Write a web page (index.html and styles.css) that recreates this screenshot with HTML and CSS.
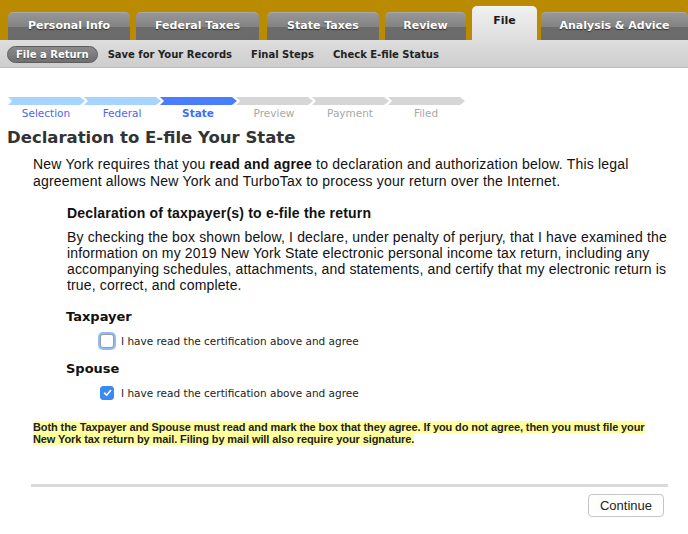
FILE: index.html
```html
<!DOCTYPE html>
<html lang="en">
<head>
    <meta charset="UTF-8">
    <title>Declaration to E-file Your State</title>
    <link rel="stylesheet" href="styles.css">
</head>
<body>
    <div class="topbar">
        <div class="tab tab-personal">Personal Info</div>
        <div class="tab tab-federal">Federal Taxes</div>
        <div class="tab tab-state">State Taxes</div>
        <div class="tab tab-review">Review</div>
        <div class="tab tab-file active">File</div>
        <div class="tab tab-analysis">Analysis &amp; Advice</div>
    </div>
    <div class="subnav">
        <span class="subnav-item current">File a Return</span>
        <span class="subnav-item">Save for Your Records</span>
        <span class="subnav-item">Final Steps</span>
        <span class="subnav-item">Check E-file Status</span>
    </div>

    <div class="steps">
        <div class="step done"><div class="arrow"></div><span>Selection</span></div>
        <div class="step done"><div class="arrow"></div><span>Federal</span></div>
        <div class="step current"><div class="arrow"></div><span>State</span></div>
        <div class="step"><div class="arrow"></div><span>Preview</span></div>
        <div class="step"><div class="arrow"></div><span>Payment</span></div>
        <div class="step"><div class="arrow"></div><span>Filed</span></div>
    </div>

    <div class="content">
        <h1>Declaration to E-file Your State</h1>
        <p class="intro">New York requires that you <b>read and agree</b> to declaration and authorization below. This legal agreement allows New York and TurboTax to process your return over the Internet.</p>

        <div class="declaration">
            <h2>Declaration of taxpayer(s) to e-file the return</h2>
            <p>By checking the box shown below, I declare, under penalty of perjury, that I have examined the information on my 2019 New York State electronic personal income tax return, including any accompanying schedules, attachments, and statements, and certify that my electronic return is true, correct, and complete.</p>
        </div>

        <div class="signer">
            <h3>Taxpayer</h3>
            <label class="agree">
                <span class="box focus"></span>
                I have read the certification above and agree
            </label>
        </div>
        <div class="signer">
            <h3>Spouse</h3>
            <label class="agree">
                <span class="box checked">
                    <svg width="9" height="8" viewBox="0 0 9 8"><path d="M1.5 4.2 L3.6 6.2 L7.6 1.6" fill="none" stroke="#fff" stroke-width="1.6" stroke-linecap="round" stroke-linejoin="round"/></svg>
                </span>
                I have read the certification above and agree
            </label>
        </div>

        <p class="note"><span>Both the Taxpayer and Spouse must read and mark the box that they agree. If you do not agree, then you must file your New York tax return by mail. Filing by mail will also require your signature.</span></p>

        <div class="footer">
            <button class="continue">Continue</button>
        </div>
    </div>
</body>
</html>
```

FILE: styles.css
```css
body {
    margin: 0;
    font-family: "Liberation Sans", Arial, sans-serif;
    color: #111;
    background: #fff;
}
.topbar {
    background-color: #ba8b00;
    height: 40px;
    display: flex;
    align-items: flex-end;
    padding-left: 8px;
}
.tab {
    height: 28px;
    margin-right: 6px;
    border-radius: 5px 5px 0 0;
    background: linear-gradient(#979797 0%, #838383 50%, #6c6c6c 51%, #6a6a6a 100%);
    border-top: 1px solid #a8a8a8;
    box-sizing: border-box;
    color: #fff;
    font-family: "DejaVu Sans", sans-serif;
    font-weight: bold;
    font-size: 11px;
    text-shadow: 0 1px 1px rgba(0,0,0,0.6);
    display: flex;
    justify-content: center;
    padding-top: 6px;
}
.tab-personal { width: 122px; }
.tab-federal { width: 123px; margin-right: 8px; }
.tab-state { width: 112px; }
.tab-review { width: 81px; }
.tab-file { width: 65px; margin-right: 4px; }
.tab-analysis { flex: 1; margin-right: 0; }
.tab.active {
    height: 34px;
    background: linear-gradient(#f0f0f0, #dedede);
    border-top: 1px solid #fafafa;
    color: #1a1a1a;
    text-shadow: none;
    padding-top: 7px;
}
.subnav {
    height: 28px;
    background: linear-gradient(#dedede, #cdcdcd);
    border-bottom: 1px solid #bdbdbd;
    box-sizing: border-box;
    display: flex;
    align-items: center;
    padding: 2px 0 0 7px;
    font-family: "DejaVu Sans", sans-serif;
    font-weight: bold;
    font-size: 10px;
    color: #222;
}
.subnav-item {
    margin-right: 19px;
}
.subnav-item.current {
    background: linear-gradient(#8a8a8a, #707070);
    border: 1px solid #5e5e5e;
    border-radius: 10px;
    color: #fff;
    padding: 2px 8px 2px 8px;
    margin-right: 10px;
    text-shadow: 0 1px 1px rgba(0,0,0,0.5);
}
.steps {
    display: flex;
    padding: 29px 0 0 8px;
}
.step {
    width: 76px;
    font-family: "DejaVu Sans", sans-serif;
    font-size: 10.5px;
    color: #a8a8a8;
    text-align: center;
}
.step .arrow {
    height: 8px;
    background: #d6d6d6;
    clip-path: polygon(0 0, calc(100% - 5px) 0, 100% 50%, calc(100% - 5px) 100%, 0 100%, 4px 50%);
    margin-right: -1px;
}
.step span {
    display: block;
    margin-top: 2px;
}
.step.done .arrow { background: #a7d3ff; }
.step.done { color: #4f63f0; }
.step.current .arrow { background: #4a7dfd; }
.step.current { color: #3c6cff; font-weight: bold; }
.content {
    padding: 0 7px;
}
h1 {
    font-family: "DejaVu Sans", sans-serif;
    font-size: 16.5px;
    color: #333;
    margin: 9px 0 9px 0;
}
.intro {
    margin: 0 0 0 26px;
    font-size: 14px;
    line-height: 17px;
    letter-spacing: 0.2px;
    width: 620px;
}
.declaration {
    margin: 15px 0 0 60px;
    width: 610px;
}
h2 {
    font-size: 14px;
    letter-spacing: 0.2px;
    margin: 0 0 8px 0;
}
.declaration p {
    margin: 0;
    font-size: 14px;
    line-height: 16px;
    letter-spacing: 0.15px;
}
.signer {
    margin-left: 59px;
}
.signer h3 {
    font-family: "DejaVu Sans", sans-serif;
    font-size: 13px;
    margin: 16px 0 10px 0;
}
.signer + .signer h3 {
    margin-top: 13px;
}
.agree {
    display: flex;
    align-items: center;
    margin-left: 34px;
    font-family: "DejaVu Sans", sans-serif;
    font-size: 10.5px;
    color: #222;
}
.box {
    width: 12px;
    height: 12px;
    border: 1px solid #9a9a9a;
    border-radius: 3px;
    margin-right: 7px;
    background: #fff;
    display: flex;
    align-items: center;
    justify-content: center;
}
.box.focus {
    box-shadow: 0 0 0 2px #8fbdf5;
}
.box.checked {
    background: #3b8af4;
    border-color: #3b8af4;
}
.note {
    margin: 21px 0 0 26px;
    width: 626px;
    font-size: 11px;
    font-weight: bold;
    line-height: 12px;
    letter-spacing: -0.1px;
    color: #222;
}
.note span {
    background: #ffff9e;
}
.footer {
    margin: 39px 13px 0 24px;
    border-top: 3px solid #dadada;
    display: flex;
    justify-content: flex-end;
    padding-top: 7px;
    padding-right: 4px;
}
.continue {
    font-family: "Liberation Sans", Arial, sans-serif;
    font-size: 13px;
    background: #fff;
    border: 1px solid #c4c4c4;
    border-radius: 4px;
    width: 76px;
    height: 23px;
    color: #222;
}
```
